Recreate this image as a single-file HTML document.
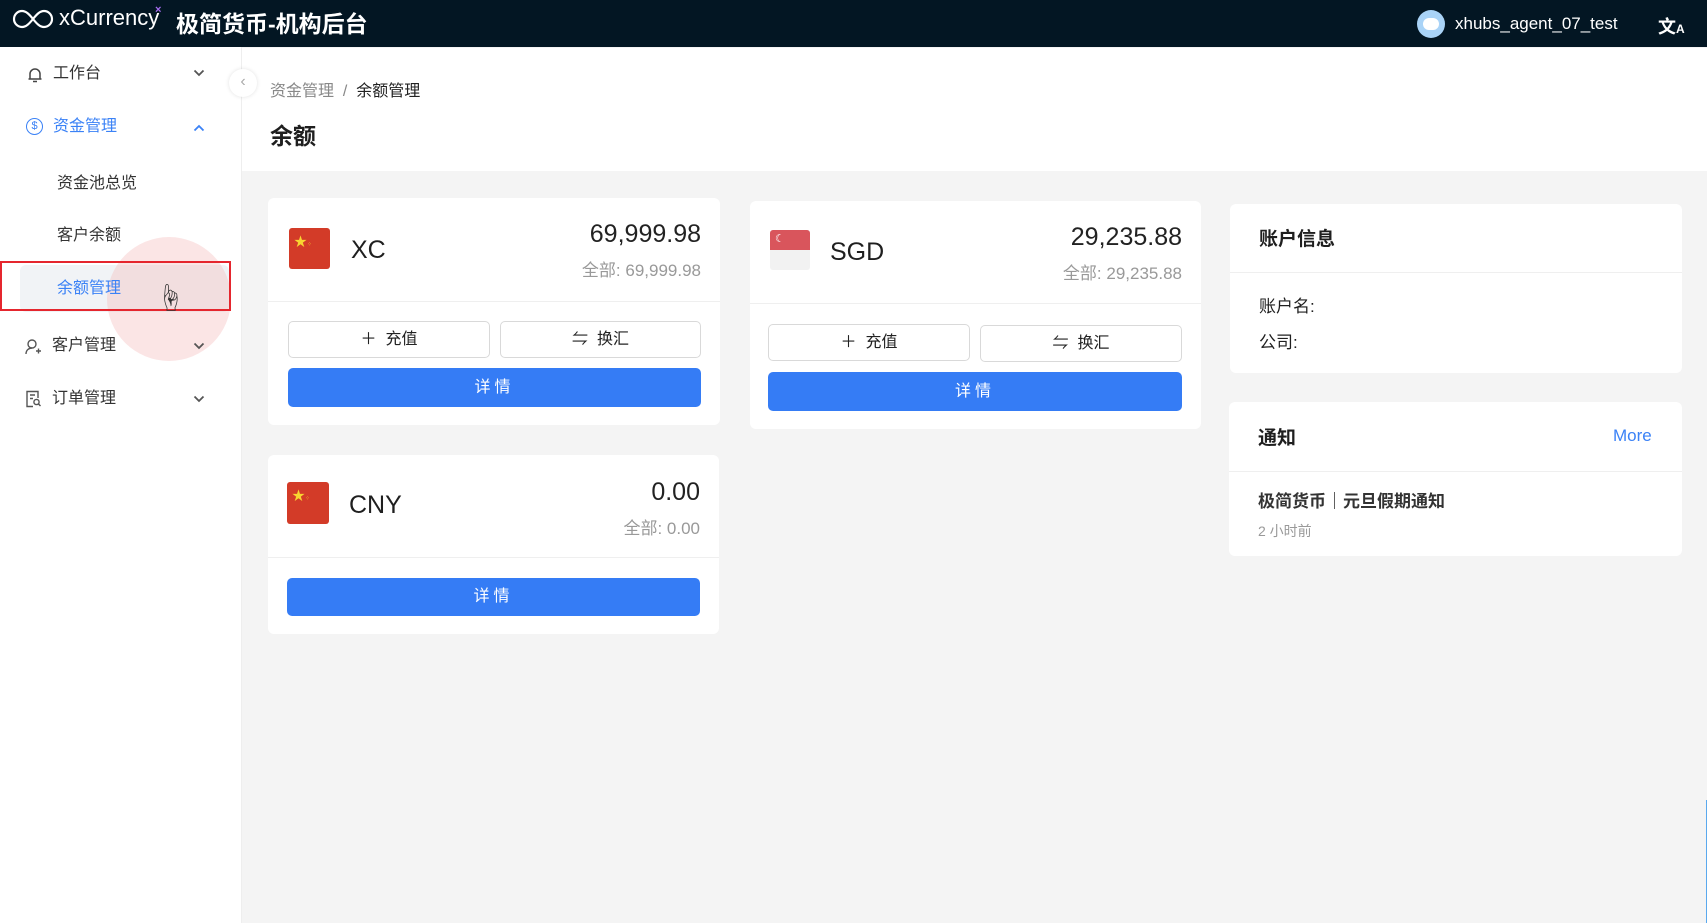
<!DOCTYPE html>
<html><head><meta charset="utf-8"><style>
*{box-sizing:border-box;margin:0;padding:0}
body{width:1707px;height:923px;overflow:hidden;background:#f4f4f4;font-family:"Liberation Sans","Noto Sans CJK SC",sans-serif;color:#1f1f1f;position:relative}
.a{position:absolute}
.hdr{left:0;top:0;width:1707px;height:47px;background:#031623}
.side{left:0;top:47px;width:242px;height:876px;background:#fff;border-right:1px solid #eee}
.mi{position:absolute;font-size:16px;color:#333;line-height:20px}
.card{position:absolute;background:#fff;border-radius:6px}
.btn{position:absolute;border:1px solid #d9d9d9;border-radius:5px;font-size:16px;text-align:center;color:#222;background:#fff}
.blue{position:absolute;background:#357cf5;border-radius:5px;color:#fff;font-size:16px;text-align:center;letter-spacing:4px}
.amt{position:absolute;right:19px;font-size:25px;color:#222}
.sub{position:absolute;right:19px;font-size:17px;color:#999}
.div{position:absolute;left:0;right:0;height:1px;background:#efefef}
.chev{position:absolute;left:193px}
</style></head><body>
<div class="a hdr">
 <svg class="a" style="left:12px;top:9px" width="42" height="20" viewBox="0 0 42 20"><path d="M21 10c-4-5-7-8-11-8a8 8 0 0 0 0 16c4 0 7-3 11-8s7-8 11-8a8 8 0 0 1 0 16c-4 0-7-3-11-8z" fill="none" stroke="#fff" stroke-width="2.2"/></svg>
 <div class="a" style="left:59px;top:5px;font-size:22px;color:#fff">xCurrency</div>
 <div class="a" style="left:155px;top:4px;font-size:11px;color:#a66cf0;font-weight:bold">×</div>
 <div class="a" style="left:176px;top:5px;font-size:23px;color:#fff;font-weight:bold">极简货币-机构后台</div>
 <div class="a" style="left:1417px;top:10px;width:28px;height:28px;border-radius:50%;background:#a9d3f7"><div class="a" style="left:6px;top:8px;width:16px;height:12px;border-radius:6px;background:#fff"></div></div>
 <div class="a" style="left:1455px;top:14px;font-size:17px;color:#fff">xhubs_agent_07_test</div>
 <div class="a" style="left:1658px;top:13px;font-size:18px;color:#fff;font-weight:bold">文<span style="font-size:12px">A</span></div>
</div>
<div class="a side">
 <div class="a" style="left:20px;top:218px;width:209px;height:47px;background:#f1f3f6;border-radius:6px"></div>
 <div class="a" style="left:107px;top:190px;width:124px;height:124px;border-radius:50%;background:rgba(245,190,190,.4)"></div>
 <div class="a" style="left:0;top:214px;width:231px;height:50px;border:2px solid #e5262e"></div>
</div>
<svg class="a" style="left:27px;top:66px" width="16" height="18" viewBox="0 0 16 18"><path d="M3 13V8a5 5 0 0 1 10 0v5h1.5H1.5zM6 15.5h4" fill="none" stroke="#444" stroke-width="1.5"/></svg>
<div class="mi" style="left:53px;top:64px">工作台</div>
<svg class="chev" style="top:69px" width="12" height="8" viewBox="0 0 12 8"><path d="M1.5 1.5l4.5 4.5 4.5-4.5" fill="none" stroke="#555" stroke-width="1.8"/></svg>
<div class="a" style="left:26px;top:118px;width:17px;height:17px;border-radius:50%;border:1.5px solid #3b82f6;color:#3b82f6;font-size:11px;text-align:center;line-height:14px">$</div>
<div class="mi" style="left:53px;top:117px;color:#3b82f6">资金管理</div>
<svg class="chev" style="top:124px" width="12" height="8" viewBox="0 0 12 8"><path d="M1.5 6.5l4.5-4.5 4.5 4.5" fill="none" stroke="#3b82f6" stroke-width="1.8"/></svg>
<div class="mi" style="left:57px;top:174px">资金池总览</div>
<div class="mi" style="left:57px;top:226px">客户余额</div>
<div class="mi" style="left:57px;top:279px;color:#3b82f6">余额管理</div>
<div class="mi" style="left:156px;top:284px;font-size:28px;line-height:30px">☝</div>
<svg class="a" style="left:25px;top:338px" width="17" height="17" viewBox="0 0 17 17"><circle cx="7" cy="6" r="4" fill="none" stroke="#555" stroke-width="1.4"/><path d="M1 16c0-4 3-6 6-6M11 13h5M13.5 10.5v5" fill="none" stroke="#555" stroke-width="1.4"/></svg>
<div class="mi" style="left:52px;top:336px">客户管理</div>
<svg class="chev" style="top:342px" width="12" height="8" viewBox="0 0 12 8"><path d="M1.5 1.5l4.5 4.5 4.5-4.5" fill="none" stroke="#555" stroke-width="1.8"/></svg>
<svg class="a" style="left:25px;top:390px" width="17" height="18" viewBox="0 0 17 18"><path d="M13 8V1.5H2v15h6M5 5h5M5 8.5h3" fill="none" stroke="#555" stroke-width="1.4"/><circle cx="11.5" cy="12" r="2.6" fill="none" stroke="#555" stroke-width="1.4"/><path d="M13.5 14l2 2" stroke="#555" stroke-width="1.4"/></svg>
<div class="mi" style="left:52px;top:389px">订单管理</div>
<svg class="chev" style="top:395px" width="12" height="8" viewBox="0 0 12 8"><path d="M1.5 1.5l4.5 4.5 4.5-4.5" fill="none" stroke="#555" stroke-width="1.8"/></svg>
<div class="a" style="left:242px;top:48px;width:1465px;height:123px;background:#fff"></div>
<div class="a" style="left:229px;top:69px;width:28px;height:28px;border-radius:50%;background:#fff;box-shadow:0 0 4px rgba(0,0,0,.12);text-align:center;color:#aaa;font-size:16px;line-height:26px">‹</div>
<div class="a" style="left:270px;top:77px;font-size:16px;color:#888">资金管理 &nbsp;/ &nbsp;<span style="color:#222">余额管理</span></div>
<div class="a" style="left:270px;top:117px;font-size:23px;font-weight:bold">余额</div>

<div class="card" style="left:268px;top:198px;width:452px;height:227px">
 <div class="a" style="left:21px;top:30px;width:41px;height:41px;background:#d33b28;border-radius:3px;color:#f8d531;font-size:13px;padding:3px 0 0 5px">★<span style="font-size:6px">⁘</span></div>
 <div class="a" style="left:83px;top:38px;font-size:25px">XC</div>
 <div class="amt" style="top:22px">69,999.98</div>
 <div class="sub" style="top:58px">全部: 69,999.98</div>
 <div class="div" style="top:103px"></div>
 <div class="btn" style="left:20px;top:123px;width:202px;height:37px;line-height:35px">＋ &nbsp;充值</div>
 <div class="btn" style="left:232px;top:123px;width:201px;height:37px;line-height:35px">⇋ &nbsp;换汇</div>
 <div class="blue" style="left:20px;top:170px;width:413px;height:39px;line-height:39px">详情</div>
</div>
<div class="card" style="left:750px;top:201px;width:451px;height:228px">
 <div class="a" style="left:20px;top:29px;width:40px;height:40px;border-radius:3px;overflow:hidden;background:#f2f2f2"><div style="height:20px;background:#d9555c;color:#fff;font-size:11px;padding-left:5px;line-height:18px">☾</div></div>
 <div class="a" style="left:80px;top:37px;font-size:25px">SGD</div>
 <div class="amt" style="top:22px">29,235.88</div>
 <div class="sub" style="top:58px">全部: 29,235.88</div>
 <div class="div" style="top:102px"></div>
 <div class="btn" style="left:18px;top:123px;width:202px;height:37px;line-height:35px">＋ &nbsp;充值</div>
 <div class="btn" style="left:230px;top:124px;width:202px;height:37px;line-height:35px">⇋ &nbsp;换汇</div>
 <div class="blue" style="left:18px;top:171px;width:414px;height:39px;line-height:39px">详情</div>
</div>
<div class="card" style="left:268px;top:455px;width:451px;height:179px">
 <div class="a" style="left:19px;top:27px;width:42px;height:42px;background:#d33b28;border-radius:3px;color:#f8d531;font-size:13px;padding:3px 0 0 5px">★<span style="font-size:6px">⁘</span></div>
 <div class="a" style="left:81px;top:36px;font-size:25px">CNY</div>
 <div class="amt" style="top:23px">0.00</div>
 <div class="sub" style="top:59px">全部: 0.00</div>
 <div class="div" style="top:102px"></div>
 <div class="blue" style="left:19px;top:123px;width:413px;height:38px;line-height:38px">详情</div>
</div>
<div class="card" style="left:1230px;top:204px;width:452px;height:169px">
 <div class="a" style="left:29px;top:20px;font-size:19px;font-weight:bold">账户信息</div>
 <div class="div" style="top:68px"></div>
 <div class="a" style="left:29px;top:88px;font-size:17px">账户名:</div>
 <div class="a" style="left:29px;top:124px;font-size:17px">公司:</div>
</div>
<div class="card" style="left:1229px;top:402px;width:453px;height:154px">
 <div class="a" style="left:29px;top:21px;font-size:19px;font-weight:bold">通知</div>
 <div class="a" style="left:384px;top:24px;font-size:17px;color:#3b82f6">More</div>
 <div class="div" style="top:69px"></div>
 <div class="a" style="left:29px;top:85px;font-size:17px;font-weight:bold;color:#333">极简货币｜元旦假期通知</div>
 <div class="a" style="left:29px;top:119px;font-size:14px;color:#999">2 小时前</div>
</div>
<div class="a" style="left:1706px;top:800px;width:1px;height:123px;background:#5aa9ee"></div>
</body></html>
